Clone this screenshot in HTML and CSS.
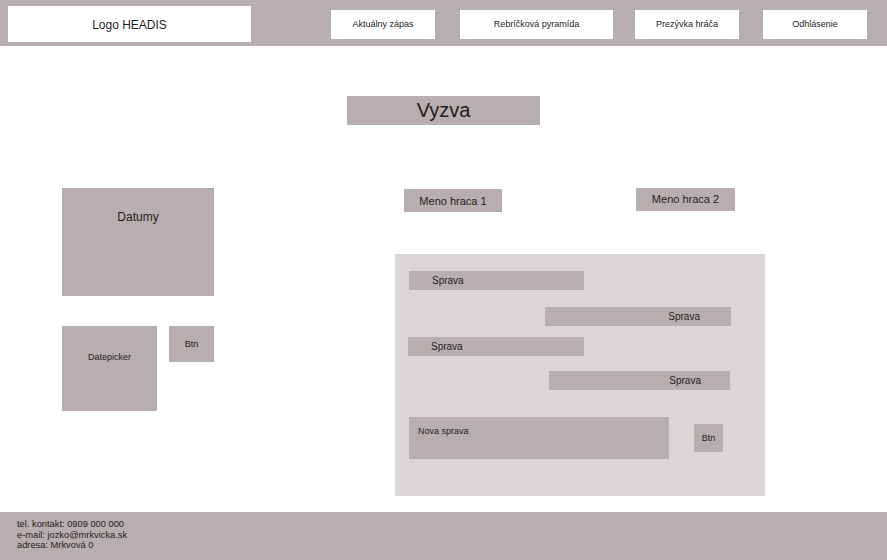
FILE: index.html
```html
<!DOCTYPE html>
<html lang="sk">
<head>
<meta charset="utf-8">
<title>Vyzva</title>
<link rel="stylesheet" href="styles.css">
</head>
<body>
<header class="header">
  <div class="logo">Logo HEADIS</div>
  <nav class="nav">
    <a class="nav-item">Aktuálny zápas</a>
    <a class="nav-item nav-wide">Rebríčková pyramída</a>
    <a class="nav-item nav-after-wide">Prezývka hráča</a>
    <a class="nav-item">Odhlásenie</a>
  </nav>
</header>
<main class="main">
  <h1 class="title">Vyzva</h1>
  <div class="content">
    <section class="left">
      <div class="datumy">Datumy</div>
      <div class="left-row">
        <div class="datepicker">Datepicker</div>
        <div class="btn-small">Btn</div>
      </div>
    </section>
    <section class="right">
      <div class="players">
        <div class="player player-1">Meno hraca 1</div>
        <div class="player player-2">Meno hraca 2</div>
      </div>
      <div class="chat">
        <div class="msg msg-l msg-1">Sprava</div>
        <div class="msg msg-r msg-2">Sprava</div>
        <div class="msg msg-l msg-3">Sprava</div>
        <div class="msg msg-r msg-4">Sprava</div>
        <div class="compose">
          <div class="new-msg">Nova sprava</div>
          <div class="send">Btn</div>
        </div>
      </div>
    </section>
  </div>
</main>
<footer class="footer">
  <div>tel. kontakt: 0909 000 000</div>
  <div>e-mail: jozko@mrkvicka.sk</div>
  <div>adresa: Mrkvová 0</div>
</footer>
</body>
</html>
```
FILE: styles.css
```css
* { box-sizing: border-box; }
html, body { margin: 0; padding: 0; }
body {
  font-family: "Liberation Sans", Arial, sans-serif;
  color: #1e1e1e;
  background: #ffffff;
  width: 887px;
  height: 560px;
  overflow: hidden;
}
.header {
  height: 46px;
  background: #b7afaf;
  display: flex;
  align-items: flex-start;
}
.logo {
  margin: 6px 0 0 8px;
  width: 243px;
  height: 36px;
  background: #fff;
  display: flex;
  align-items: center;
  justify-content: center;
  font-size: 12px;
  padding-top: 1px;
}
.nav {
  display: flex;
  margin: 10px 0 0 80px;
}
.nav-item {
  width: 104px;
  height: 29px;
  background: #fff;
  display: flex;
  align-items: center;
  justify-content: center;
  font-size: 9px;
  padding-bottom: 2px;
  margin-left: 24px;
}
.nav-item:first-child { margin-left: 0; }
.nav-wide { width: 153px; margin-left: 25px; }
.nav-after-wide { margin-left: 22px; }
.main {
  height: 466px;
  padding-top: 50px;
}
.title {
  margin: 0 auto;
  width: 193px;
  height: 29px;
  background: #b7afaf;
  font-size: 20px;
  font-weight: normal;
  display: flex;
  align-items: center;
  justify-content: center;
}
.content {
  display: flex;
  align-items: flex-start;
  margin-top: 63px;
  padding-left: 62px;
}
.left { width: 152px; }
.datumy {
  height: 108px;
  background: #b7afaf;
  text-align: center;
  font-size: 12px;
  line-height: 14px;
  padding-top: 22px;
}
.left-row {
  display: flex;
  align-items: flex-start;
  gap: 12px;
  margin-top: 30px;
}
.datepicker {
  width: 95px;
  height: 85px;
  background: #b7afaf;
  text-align: center;
  font-size: 9px;
  line-height: 11px;
  padding-top: 26px;
}
.btn-small {
  width: 45px;
  height: 36px;
  background: #b7afaf;
  font-size: 9px;
  display: flex;
  align-items: center;
  justify-content: center;
}
.right {
  margin-left: 181px;
  width: 370px;
}
.players {
  display: flex;
  align-items: flex-start;
  height: 24px;
}
.player {
  height: 23px;
  background: #b7afaf;
  font-size: 11px;
  display: flex;
  align-items: center;
  justify-content: center;
}
.player-1 { width: 98px; margin-left: 9px; margin-top: 1px; }
.player-2 { width: 99px; margin-left: 134px; padding-bottom: 2px; }
.chat {
  margin-top: 42px;
  height: 242px;
  background: #dbd6d6;
  padding-top: 17px;
  display: flex;
  flex-direction: column;
  align-items: flex-start;
}
.msg {
  height: 19px;
  background: #b7afaf;
  font-size: 10px;
  display: flex;
  align-items: center;
}
.msg-l { padding-left: 23px; }
.msg-r { justify-content: flex-end; padding-right: 31px; }
.msg-1 { margin-left: 14px; width: 175px; }
.msg-2 { margin-left: 150px; width: 186px; margin-top: 17px; }
.msg-3 { margin-left: 13px; width: 176px; margin-top: 11px; }
.msg-4 { margin-left: 154px; width: 181px; margin-top: 15px; padding-right: 29px; }
.compose {
  display: flex;
  align-items: flex-start;
  margin: 27px 0 0 14px;
}
.new-msg {
  width: 260px;
  height: 42px;
  background: #b7afaf;
  font-size: 9px;
  line-height: 11px;
  padding: 9px 0 0 9px;
}
.send {
  width: 29px;
  height: 28px;
  margin: 7px 0 0 25px;
  background: #b7afaf;
  font-size: 9px;
  display: flex;
  align-items: center;
  justify-content: center;
}
.footer {
  height: 48px;
  background: #b7afaf;
  padding: 7px 0 0 17px;
  font-size: 9.3px;
  line-height: 10.5px;
}
```
